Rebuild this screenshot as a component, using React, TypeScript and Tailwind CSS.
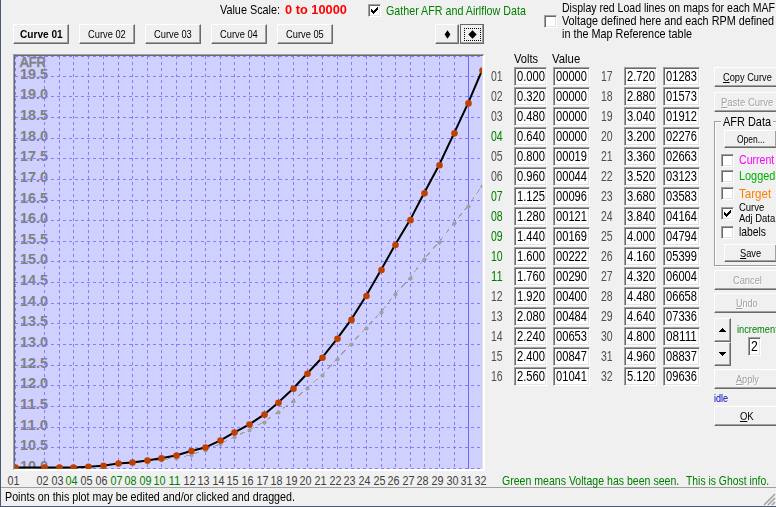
import { useLayoutEffect, useRef } from 'react'
import type { ReactNode } from 'react'

const volts = [
  '0.000', '0.320', '0.480', '0.640', '0.800', '0.960', '1.125', '1.280',
  '1.440', '1.600', '1.760', '1.920', '2.080', '2.240', '2.400', '2.560',
  '2.720', '2.880', '3.040', '3.200', '3.360', '3.520', '3.680', '3.840',
  '4.000', '4.160', '4.320', '4.480', '4.640', '4.800', '4.960', '5.120'
]

const values = [
  '00000', '00000', '00000', '00000', '00019', '00044', '00096', '00121',
  '00169', '00222', '00290', '00400', '00484', '00653', '00847', '01041',
  '01283', '01573', '01912', '02276', '02663', '03123', '03583', '04164',
  '04794', '05399', '06004', '06658', '07336', '08111', '08837', '09636'
]

// voltages that have been logged
const seen = [4, 7, 8, 9, 10, 11]

const gridX = [
  2, 31, 46, 60, 75, 90, 105, 119, 134, 148, 163, 178, 192, 207, 221, 236,
  251, 265, 280, 294, 309, 324, 338, 353, 368, 382, 397, 411, 426, 441, 455, 469
]
const gridY = [
  2, 22, 42, 63, 84, 104, 125, 146, 166, 187, 207, 228, 249, 269, 290, 311, 331, 352, 373, 393, 414
]
const ghost = [
  414, 414, 414, 414, 413, 412, 410, 409, 408, 406, 404, 401, 396, 390, 383, 376,
  368, 358, 347, 334, 321, 305, 290, 274, 258, 240, 224, 205, 188, 169, 152, 132
]

const pad = (n: number) => String(n).padStart(2, '0')

interface FitProps {
  children: ReactNode
  className?: string
}

// squeezes a line of text into the width of its box
function Fit({ children, className = '' }: FitProps) {
  const box = useRef<HTMLSpanElement>(null)
  const inner = useRef<HTMLSpanElement>(null)

  useLayoutEffect(() => {
    if (!box.current || !inner.current) return
    const scale = box.current.clientWidth / inner.current.offsetWidth
    inner.current.style.transform = `scaleX(${scale})`
  }, [children])

  return (
    <span className={`block shrink-0 whitespace-pre ${className}`}>
      <span ref={box} className="block w-full">
        <span ref={inner} className="inline-block origin-left">{children}</span>
      </span>
    </span>
  )
}

interface ButtonProps {
  children: ReactNode
  className?: string
  disabled?: boolean
}

function Button({ children, className = '', disabled }: ButtonProps) {
  return (
    <button
      type="button"
      disabled={disabled}
      className={`flex shrink-0 items-center justify-center border border-t-white border-l-white border-r-[#696969] border-b-[#696969] bg-[#f0f0f0] text-[11.5px] leading-[14px] shadow-[inset_-1px_-1px_0_#a0a0a0] ${disabled ? 'text-[#a0a0a0] [text-shadow:1px_1px_0_#fff]' : 'text-black'} ${className}`}
    >
      {children}
    </button>
  )
}

function Check({ checked, className = '' }: { checked?: boolean; className?: string }) {
  return (
    <span className={`block h-[13px] w-[13px] shrink-0 border border-t-[#a0a0a0] border-l-[#a0a0a0] border-r-white border-b-white bg-white shadow-[inset_1px_1px_0_#696969,inset_-1px_-1px_0_#e3e3e3] ${className}`}>
      {checked && (
        <svg className="block h-[11px] w-[11px]" viewBox="0 0 11 11" shapeRendering="crispEdges">
          <path d="M2 4h1v1h1v1h1v-1h1v-1h1v-1h1v-1h1v3h-1v1h-1v1h-1v1h-1v1h-1v-1h-1v-1h-1z" />
        </svg>
      )}
    </span>
  )
}

function Field({ value, className = '' }: { value: string; className?: string }) {
  return (
    <div className={`flex h-[19px] shrink-0 items-center border border-t-[#a0a0a0] border-l-[#a0a0a0] border-r-white border-b-white bg-white pl-[2px] text-[14px] leading-[17px] text-black shadow-[inset_1px_1px_0_#696969,inset_-1px_-1px_0_#e3e3e3] ${className}`}>
      <Fit className={value.length === 1 ? 'w-[7px]' : value.includes('.') ? 'w-[28px]' : 'w-[31px]'}>{value}</Fit>
    </div>
  )
}

function Chart() {
  const curve = values.map((v, i) => [gridX[i], 413.5 - Number(v) * 0.0412])
  return (
    <div className="h-[434px] w-[487px]">
      <svg className="block overflow-visible" width="487" height="434" viewBox="0 0 487 434">
        <g shapeRendering="crispEdges">
          <rect x="0" y="0" width="472" height="417" fill="#fff" />
          <path d="M0 0H471V1H1V416H0z" fill="#a0a0a0" />
          <path d="M1 1H470V2H2V415H1z" fill="#696969" />
          <rect x="2" y="2" width="467" height="413" fill="#d0d0ff" />
          <path d="M469 2H470V415H469z" fill="#e3e3e3" />
        </g>
        <svg x="2" y="2" width="467" height="413" viewBox="2 2 467 413">
          <g fill="#808080" fontSize="14" fontWeight="bold">
            <text x="7" y="13" textLength="26" lengthAdjust="spacingAndGlyphs" fontWeight="normal" stroke="#808080" strokeWidth="0.7">AFR</text>
            {gridY.slice(1).map((y, i) => (
              <text key={y} x="7" y={y + 3} textLength="28" lengthAdjust="spacingAndGlyphs">
                {(19.5 - i * 0.5).toFixed(1)}
              </text>
            ))}
          </g>
          <g stroke="#8080ff" strokeDasharray="3 3" shapeRendering="crispEdges">
            {gridX.slice(0, 30).map((x) => (
              <line key={x} x1={x + 0.5} x2={x + 0.5} y1="2" y2="415" />
            ))}
            {gridY.map((y) => (
              <line key={y} x1="2" x2="469" y1={y + 0.5} y2={y + 0.5} />
            ))}
          </g>
          <line x1="455.5" x2="455.5" y1="2" y2="415" stroke="#6a6aff" shapeRendering="crispEdges" />
          <polyline
            points={ghost.map((y, i) => `${gridX[i]},${y}`).join(' ')}
            fill="none"
            stroke="#a0a0a0"
            strokeDasharray="6 4"
            shapeRendering="crispEdges"
          />
          {ghost.map((y, i) => (
            <circle key={i} cx={gridX[i] + 0.5} cy={y + 0.5} r="2.1" fill="#a0a0a0" />
          ))}
          <polyline points={curve.map((p) => p.join(',')).join(' ')} fill="none" stroke="#000" strokeWidth="2" />
          {curve.map(([x, y], i) => (
            <circle key={i} cx={x + 0.5} cy={y} r="3.3" fill="#c04000" />
          ))}
        </svg>
        <g fontSize="13">
          {gridX.map((x, i) => (
            <text
              key={x}
              x={x - 7.5}
              y="431"
              textLength="12"
              lengthAdjust="spacingAndGlyphs"
              className={seen.includes(i + 1) ? 'fill-[#008000]' : 'fill-[#404040]'}
            >
              {pad(i + 1)}
            </text>
          ))}
        </g>
      </svg>
    </div>
  )
}

function Table({ start }: { start: number }) {
  return (
    <div className="flex flex-col gap-px">
      {volts.slice(start, start + 16).map((v, i) => {
        const n = start + i + 1
        return (
          <div key={v} className="flex items-center">
            <Fit className={`mr-[11px] w-[12px] text-[14px] leading-[19px] ${seen.includes(n) ? 'text-[#008000]' : 'text-[#505050]'}`}>{pad(n)}</Fit>
            <Field value={v} className="mr-[6px] w-[33px]" />
            <Field value={values[n - 1]} className="w-[37px]" />
          </div>
        )
      })}
    </div>
  )
}

function Diamond({ wide }: { wide?: boolean }) {
  return (
    <svg className="block" width="9" height="9" viewBox="0 0 9 9">
      <path d={wide ? 'M4.5 0.3L8.7 4.5L4.5 8.7L0.3 4.5z' : 'M4.5 0.3L7.4 4.5L4.5 8.7L1.6 4.5z'} />
    </svg>
  )
}

function Arrow({ down }: { down?: boolean }) {
  return (
    <svg className="block" width="7" height="4" viewBox="0 0 7 4" shapeRendering="crispEdges">
      <path d={down ? 'M0 0H7V1H6V2H5V3H4V4H3V3H2V2H1V1H0z' : 'M3 0H4V1H5V2H6V3H7V4H0V3H1V2H2V1H3z'} />
    </svg>
  )
}

function Sidebar() {
  return (
    <div className="flex w-[66px] shrink-0 flex-col pt-[14px]">
      <Button className="h-[20px]"><Fit className="w-[49px]"><u>C</u>opy Curve</Fit></Button>
      <Button disabled className="mt-[5px] h-[20px]"><Fit className="w-[52px]"><u>P</u>aste Curve</Fit></Button>

      <fieldset className="relative mt-[9px] h-[145px] border border-[#a0a0a0] pl-[6px] shadow-[inset_1px_1px_0_#fff,1px_1px_0_#fff]">
        <span className="absolute -top-[8px] left-[6px] bg-[#f0f0f0] px-[2px] text-[13px] leading-[16px]"><Fit className="w-[48px]">AFR Data</Fit></span>
        <Button className="mt-[8px] ml-[3px] h-[18px] w-[53px]"><Fit className="w-[28px]">Open...</Fit></Button>
        <div className="mt-[4px] flex h-[16px] items-center text-[13px] leading-[16px] text-[#ff00ff]">
          <Check className="mr-[5px]" /><Fit className="w-[35px]">Current</Fit>
        </div>
        <div className="flex h-[16px] items-center text-[13px] leading-[16px] text-[#00b000]">
          <Check className="mr-[5px]" /><Fit className="w-[36px]">Logged</Fit>
        </div>
        <div className="mt-px flex h-[17px] items-center text-[13px] leading-[16px] text-[#ff8000]">
          <Check className="mr-[5px]" /><Fit className="w-[32px]">Target</Fit>
        </div>
        <div className="flex h-[22px] items-center text-[11px] leading-[11px]">
          <Check checked className="mr-[5px]" />
          <div>
            <Fit className="w-[25px]">Curve</Fit>
            <Fit className="w-[36px]">Adj Data</Fit>
          </div>
        </div>
        <div className="flex h-[16px] items-center text-[13px] leading-[16px]">
          <Check className="mr-[5px]" /><Fit className="w-[27px]">labels</Fit>
        </div>
        <Button className="mt-[4px] ml-[3px] h-[18px] w-[53px]"><Fit className="w-[21px]"><u>S</u>ave</Fit></Button>
      </fieldset>

      <Button disabled className="mt-[4px] h-[20px]"><Fit className="w-[29px]">Cancel</Fit></Button>
      <Button disabled className="mt-[3px] h-[20px]"><Fit className="w-[22px]"><u>U</u>ndo</Fit></Button>

      <div className="mt-[5px] flex h-[48px]">
        <div className="flex w-[17px] flex-col">
          <Button className="h-[24px]"><Arrow /></Button>
          <Button className="h-[24px]"><Arrow down /></Button>
        </div>
        <div className="ml-[6px] pt-[4px]">
          <Fit className="w-[43px] text-[11px] leading-[14px] text-[#008000]">increment:</Fit>
          <Field value="2" className="mt-px ml-[11px] h-[18px] w-[13px]" />
        </div>
      </div>

      <Button disabled className="mt-[3px] h-[20px]"><Fit className="w-[23px]"><u>A</u>pply</Fit></Button>
      <Fit className="mt-px w-[14px] text-[11px] leading-[16px] text-[#0000c0]">idle</Fit>
      <Button className="h-[20px]"><Fit className="w-[14px]"><u>O</u>K</Fit></Button>
    </div>
  )
}

export default function App() {
  return (
    <div className="flex h-[507px] w-[776px] flex-col overflow-hidden border-b border-l border-[#4a5a70] bg-[#f0f0f0] font-['Liberation_Sans',Arial,sans-serif] text-[13px] leading-[16px] text-black">
      <div className="flex h-[53px] shrink-0">
        <div className="w-[543px]">
          <div className="flex h-[24px] items-start">
            <Fit className="mt-[2px] ml-[219px] w-[60px]">Value Scale:</Fit>
            <Fit className="mt-[2px] ml-[5px] w-[62px] font-bold text-[#ff0000]">0 to 10000</Fit>
            <Check checked className="mt-[4px] ml-[21px]" />
            <Fit className="mt-[3px] ml-[5px] w-[140px] text-[#008000]">Gather AFR and Airlflow Data</Fit>
          </div>
          <div className="flex pl-[12px]">
            <div className="flex gap-[10px]">
              <Button className="h-[20px] w-[56px] font-bold"><Fit className="w-[43px]">Curve 01</Fit></Button>
              {['02', '03', '04', '05'].map((n) => (
                <Button key={n} className="h-[20px] w-[56px]"><Fit className="w-[38px]">{`Curve ${n}`}</Fit></Button>
              ))}
            </div>
            <Button className="ml-[102px] h-[20px] w-[24px]"><Diamond /></Button>
            <Button className="ml-px h-[20px] w-[24px] outline outline-[#696969] -outline-offset-1">
              <span className="flex h-[13px] w-[17px] items-center justify-center border border-dotted border-black"><Diamond wide /></span>
            </Button>
          </div>
        </div>
        <div className="flex shrink-0">
          <Check className="mt-[15px] mr-[5px]" />
          <div className="pt-px text-[13px] leading-[13px]">
            <Fit className="w-[213px]">Display red Load lines on maps for each MAF</Fit>
            <Fit className="w-[212px]">Voltage defined here and each RPM defined</Fit>
            <Fit className="w-[130px]">in the Map Reference table</Fit>
          </div>
        </div>
      </div>

      <div className="flex h-[434px] shrink-0">
        <div className="w-[490px] shrink-0 pt-px pl-[12px]"><Chart /></div>
        <div className="w-[223px] shrink-0">
          <div className="flex h-[14px] pl-[23px] leading-[12px]">
            <Fit className="w-[24px]">Volts</Fit>
            <Fit className="ml-[14px] w-[28px]">Value</Fit>
          </div>
          <div className="flex gap-[11px]">
            <Table start={0} />
            <Table start={16} />
          </div>
          <div className="flex gap-[7px] pt-[88px] pl-[11px] leading-[14px] text-[#008000]">
            <Fit className="w-[177px]">Green means Voltage has been seen.</Fit>
            <Fit className="w-[83px]">This is Ghost info.</Fit>
          </div>
        </div>
        <Sidebar />
      </div>

      <div className="flex h-[19px] shrink-0 items-center justify-between border-t border-[#a0a0a0] pl-[4px]">
        <Fit className="w-[290px]">Points on this plot may be edited and/or clicked and dragged.</Fit>
        <svg className="mt-[5px] block" width="13" height="13" viewBox="0 0 13 13" stroke="#a0a0a0" strokeWidth="1.5">
          <path d="M1 12L12 1M5 12L12 5M9 12L12 9" />
        </svg>
      </div>
    </div>
  )
}
